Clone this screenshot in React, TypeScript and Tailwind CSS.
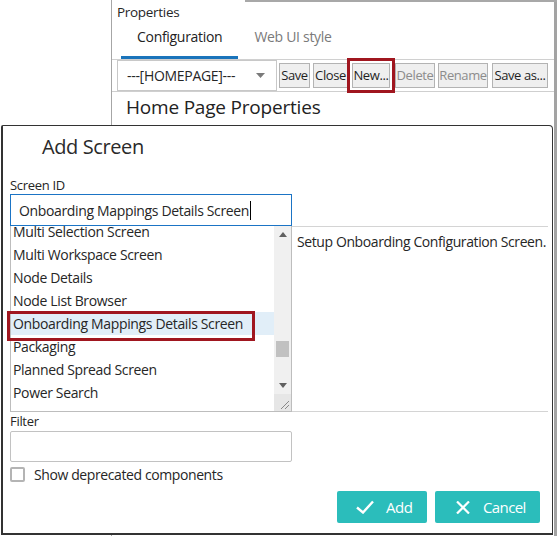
import React from "react";

const items = [
  "Multi Selection Screen",
  "Multi Workspace Screen",
  "Node Details",
  "Node List Browser",
  "Onboarding Mappings Details Screen",
  "Packaging",
  "Planned Spread Screen",
  "Power Search",
];

function ToolBtn({ label, disabled, className = "" }: { label: string; disabled?: boolean; className?: string }) {
  return (
    <div
      className={
        "h-[25px] shrink-0 flex items-center justify-center whitespace-nowrap border border-[#b3b3b3] bg-[#efefef] text-[13px] tracking-[-0.4px] leading-none " +
        (disabled ? "text-[#8c8c8c] " : "text-[#1f1f1f] ") +
        className
      }
    >
      {label}
    </div>
  );
}

export default function App() {
  return (
    <div className="relative w-[559px] h-[536px] overflow-hidden bg-white flex font-['Open_Sans',sans-serif] text-[#262626] tracking-[-0.3px]">
      {/* left blank column */}
      <div className="w-[112px] shrink-0 border-r border-[#a6a6a6]" />

      {/* properties panel */}
      <div className="flex-1 min-w-0 mr-[2px] border-r-[3px] border-[#a3a3a3] flex flex-col pl-[5px]">
        <div className="mt-[3px] h-[18px] text-[13.5px] leading-[18px]">Properties</div>
        <div className="border-b border-[#d0d0d0] -ml-[5px] pl-[9px]">
          <div className="flex h-[38px]">
            <div className="px-[16px] flex items-center pb-[4px] border-b-[3px] border-[#1a74bb] text-[14px] text-[#222]">
              Configuration
            </div>
            <div className="px-[16px] flex items-center pb-[7px] text-[14px] text-[#7a7a7a]">Web UI style</div>
          </div>
        </div>
        <div className="h-[32px] border-b border-[#cfcfcf] -ml-[5px] pl-[5px] flex items-center">
          <div className="w-[160px] shrink-0 h-[31px] self-start border border-[#c8c8c8] flex items-center justify-between pl-[9px] pr-[11px] text-[14px] whitespace-nowrap">
            <span>---[HOMEPAGE]---</span>
            <svg width="9" height="5" viewBox="0 0 9 5">
              <polygon points="0,0 9,0 4.5,5" fill="#7a7a7a" />
            </svg>
          </div>
          <ToolBtn label="Save" className="w-[31px] ml-[2px] -mt-[1px]" />
          <ToolBtn label="Close" className="w-[35px] ml-[3px] -mt-[1px]" />
          <ToolBtn
            label="New..."
            className="w-[38px] ml-[4px] -mt-[1px] outline-[3px] outline-solid outline-[#a0161f] outline-offset-[2px]"
          />
          <ToolBtn label="Delete" disabled className="w-[40px] ml-[5px] -mt-[1px]" />
          <ToolBtn label="Rename" disabled className="w-[50px] ml-[3px] -mt-[1px]" />
          <ToolBtn label="Save as..." className="w-[56px] ml-[4px] -mt-[1px]" />
        </div>
        <div className="mt-[2px] pl-[9px] h-[26px] leading-[26px] text-[19px] text-[#222] tracking-[-0.2px]">
          Home Page Properties
        </div>
      </div>

      {/* top window edge */}
      <div className="absolute top-0 left-[245px] w-[312px] h-[2px] bg-[#a8a8a8]" />

      {/* dialog */}
      <div className="absolute left-[1px] top-[125px] w-[552px] h-[410px] bg-white border border-[#333] border-l-2 border-b-2 rounded-tr-[4px] rounded-tl-[2px] flex flex-col pl-[7px]">
        <div className="mt-[7px] h-[28px] leading-[28px] text-[20px] pl-[32px] text-[#2a2a2a] tracking-[-0.4px]">
          Add Screen
        </div>
        <div className="mt-[15px] h-[18px] leading-[18px] text-[13px]">Screen ID</div>
        <div className="w-[282px] h-[32px] border border-[#1b74c5] flex items-center pl-[8px] text-[14px] tracking-[-0.35px] whitespace-nowrap">
          <span>Onboarding Mappings Details Screen</span>
          <span className="w-px h-[19px] bg-black ml-px" />
        </div>

        <div className="flex h-[186px]">
          <div className="relative w-[282px] border-l border-r border-b border-[#bdbdbd] flex">
            <div className="flex-1 overflow-hidden">
              <div className="-mt-[6px]">
                {items.map((it) => (
                  <div
                    key={it}
                    className={
                      "h-[23px] leading-[23px] pl-[2px] text-[14px] tracking-[-0.35px] whitespace-nowrap " +
                      (it.startsWith("Onboarding") ? "bg-[#e1eef8]" : "")
                    }
                  >
                    {it}
                  </div>
                ))}
              </div>
            </div>
            <div className="w-[17px] bg-[#f0f0f0] flex flex-col">
              <div className="h-[17px] flex items-center justify-center">
                <svg width="8" height="5" viewBox="0 0 8 5">
                  <polygon points="0,5 8,5 4,0" fill="#606060" />
                </svg>
              </div>
              <div className="flex-1 pt-[98px] px-[2px]">
                <div className="h-[16px] bg-[#c1c1c1]" />
              </div>
              <div className="h-[17px] flex items-center justify-center">
                <svg width="8" height="5" viewBox="0 0 8 5">
                  <polygon points="0,0 8,0 4,5" fill="#606060" />
                </svg>
              </div>
              <div className="h-[17px] bg-[#e6e6e6] flex items-end justify-end pr-[2px] pb-[2px]">
                <svg width="10" height="10" viewBox="0 0 10 10">
                  <line x1="2" y1="10" x2="10" y2="2" stroke="#888" strokeWidth="1" />
                  <line x1="6" y1="10" x2="10" y2="6" stroke="#888" strokeWidth="1" />
                </svg>
              </div>
            </div>
            <div className="absolute left-[-4px] top-[85px] w-[248px] h-[30px] border-[3px] border-[#a0161f]" />
          </div>
          <div className="w-[256px] border-t border-b border-[#d4d4d4] pl-[5px] pt-[6px] text-[14px] leading-[18px] tracking-[-0.4px] whitespace-nowrap">
            Setup Onboarding Configuration Screen.
          </div>
        </div>

        <div className="h-[19px] leading-[19px] text-[13px]">Filter</div>
        <div className="w-[282px] h-[31px] border border-[#c2c2c2] rounded-[2px]" />
        <div className="mt-[5px] h-[15px] flex items-center">
          <div className="w-[15px] h-[15px] border-2 border-[#b4b4b4] rounded-[2px]" />
          <span className="ml-[9px] text-[14px] tracking-[-0.4px]">Show deprecated components</span>
        </div>

        <div className="mt-[9px] flex justify-end pr-[12px] gap-[8px]">
          <div className="w-[90px] h-[32px] bg-[#2bbdbb] rounded-[2px] flex items-center text-white text-[15px] tracking-[-0.5px]">
            <svg className="ml-[19px]" width="18" height="14" viewBox="0 0 18 14">
              <polyline points="1,7.5 7,12.5 17,1.5" fill="none" stroke="white" strokeWidth="2.4" />
            </svg>
            <span className="ml-[12px]">Add</span>
          </div>
          <div className="w-[105px] h-[32px] bg-[#2bbdbb] rounded-[2px] flex items-center text-white text-[15px] tracking-[-0.6px]">
            <svg className="ml-[21px]" width="14" height="13" viewBox="0 0 14 13">
              <line x1="1" y1="0.5" x2="13" y2="12.5" stroke="white" strokeWidth="2.2" />
              <line x1="13" y1="0.5" x2="1" y2="12.5" stroke="white" strokeWidth="2.2" />
            </svg>
            <span className="ml-[13px]">Cancel</span>
          </div>
        </div>
      </div>
    </div>
  );
}
